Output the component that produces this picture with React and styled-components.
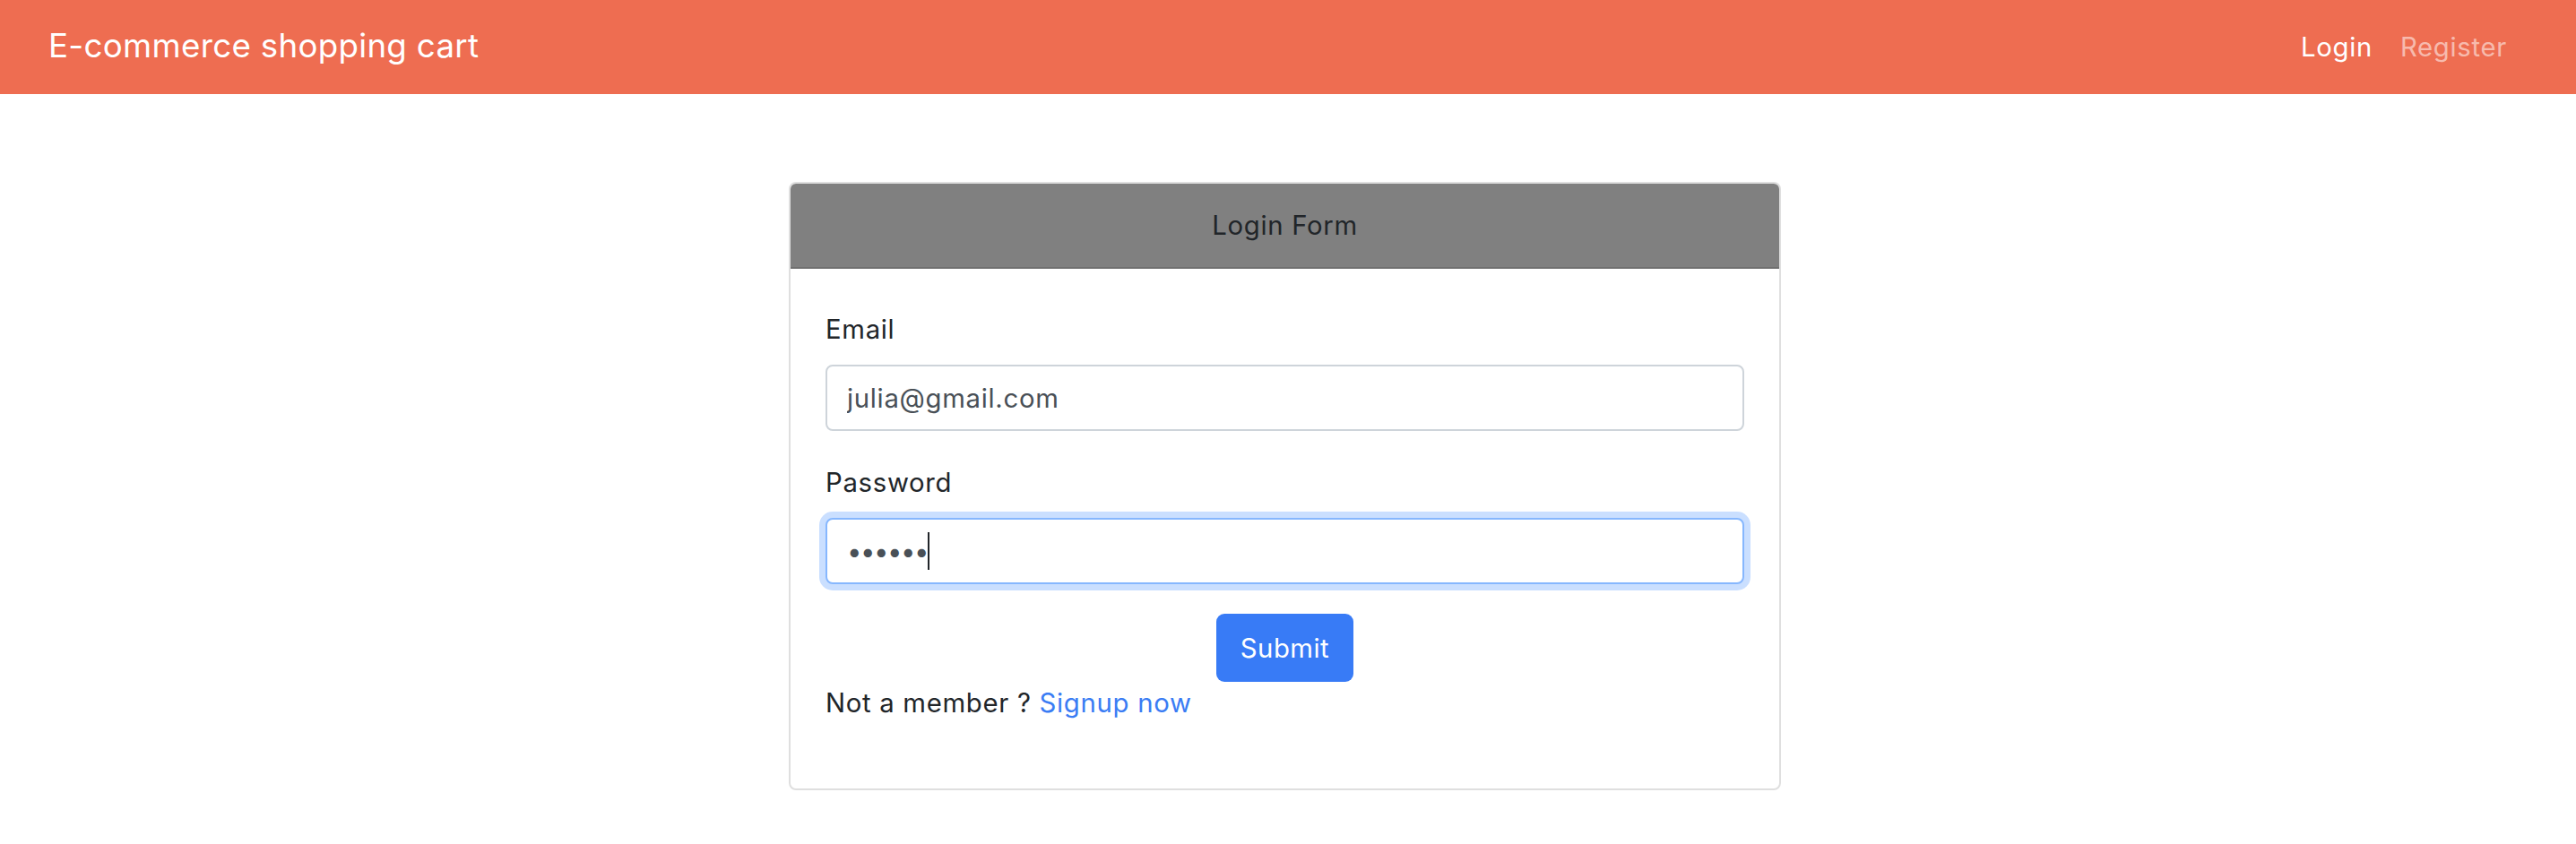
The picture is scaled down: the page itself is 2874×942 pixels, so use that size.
import React from "react";
import styled, { createGlobalStyle } from "styled-components";

const GlobalStyle = createGlobalStyle`
  html, body {
    margin: 0;
    padding: 0;
    background: #fff;
  }
  body {
    font-family: Inter, "Noto Sans", "Liberation Sans", sans-serif;
    color: #212529;
    letter-spacing: 0.7px;
  }
  * {
    box-sizing: border-box;
  }
`;

const Navbar = styled.nav`
  height: 105px;
  background: #ee6d51;
  display: flex;
  align-items: center;
  justify-content: space-between;
  padding: 0 77px 0 54px;
`;

const Brand = styled.a`
  color: #fff;
  font-size: 36.7px;
  line-height: 55px;
  letter-spacing: 0.3px;
  text-decoration: none;
  margin-top: -4px;
`;

const NavLinks = styled.div`
  display: flex;
  gap: 31px;
`;

const NavLink = styled.a`
  color: ${(p) => (p.$active ? "#fff" : "rgba(255, 255, 255, 0.55)")};
  font-size: 29.3px;
  line-height: 44px;
  text-decoration: none;
`;

const Main = styled.main`
  display: flex;
  justify-content: center;
  padding: 98px 7px 0 0;
`;

const Card = styled.div`
  width: 1107px;
  border: 2px solid #dfdfdf;
  border-radius: 8px;
  overflow: hidden;
  background: #fff;
`;

const CardHeader = styled.div`
  background: #808080;
  text-align: center;
  padding: 25px 0 24px;
  font-size: 29.3px;
  line-height: 44px;
  color: #212529;
  border-bottom: 2px solid rgba(0, 0, 0, 0.12);
`;

const Form = styled.form`
  display: flex;
  flex-direction: column;
  padding: 46px 39px 73px;
`;

const Field = styled.div`
  margin-bottom: ${(p) => p.$mb || "36px"};
`;

const Label = styled.label`
  display: block;
  font-size: 29.3px;
  line-height: 44px;
  margin-bottom: 17px;
`;

const InputWrap = styled.div`
  position: relative;
`;

const Input = styled.input`
  display: block;
  width: 100%;
  height: 74px;
  padding: 0 22px;
  font-family: inherit;
  font-size: 29.3px;
  letter-spacing: ${(p) => (p.type === "password" ? "-1.5px" : "0.7px")};
  color: #495057;
  background: #fff;
  border: 2px solid ${(p) => (p.$focused ? "#86b7fe" : "#ced4da")};
  border-radius: 8px;
  outline: none;
  box-shadow: ${(p) => (p.$focused ? "0 0 0 7px rgba(13, 110, 253, 0.22)" : "none")};
`;

/* text caret drawn over the focused password field */
const Caret = styled.span`
  position: absolute;
  left: 114px;
  top: 16px;
  width: 2px;
  height: 42px;
  background: #212529;
  pointer-events: none;
`;

const SubmitButton = styled.button`
  align-self: center;
  width: 153px;
  height: 76px;
  border: none;
  border-radius: 9px;
  background: #387bf6;
  color: #fff;
  font-family: inherit;
  font-size: 29.3px;
  letter-spacing: 0.5px;
  cursor: pointer;
`;

const Footnote = styled.p`
  margin: 2px 0 0;
  font-size: 29.3px;
  line-height: 44px;
`;

const SignupLink = styled.a`
  color: #3a7cf4;
  text-decoration: none;
`;

export default function App() {
  return (
    <>
      <GlobalStyle />
      <Navbar>
        <Brand href="#">E-commerce shopping cart</Brand>
        <NavLinks>
          <NavLink href="#" $active>
            Login
          </NavLink>
          <NavLink href="#">Register</NavLink>
        </NavLinks>
      </Navbar>
      <Main>
        <Card>
          <CardHeader>Login Form</CardHeader>
          <Form onSubmit={(e) => e.preventDefault()}>
            <Field>
              <Label htmlFor="email">Email</Label>
              <Input id="email" type="email" defaultValue="julia@gmail.com" />
            </Field>
            <Field $mb="33px">
              <Label htmlFor="password">Password</Label>
              <InputWrap>
                <Input id="password" type="password" defaultValue="julia1" $focused />
                <Caret />
              </InputWrap>
            </Field>
            <SubmitButton type="submit">Submit</SubmitButton>
            <Footnote>
              Not a member ? <SignupLink href="#">Signup now</SignupLink>
            </Footnote>
          </Form>
        </Card>
      </Main>
    </>
  );
}
